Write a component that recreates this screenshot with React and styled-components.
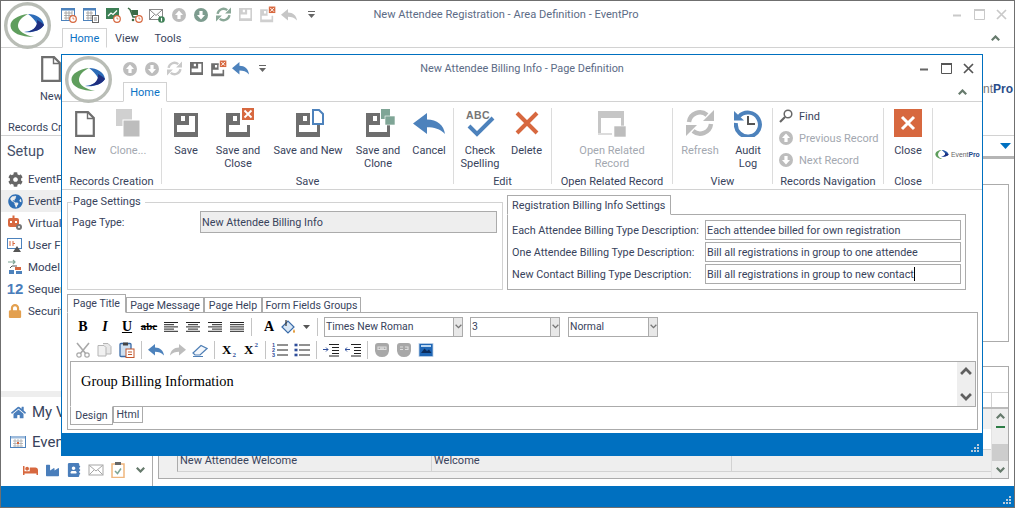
import React from "react";
import styled, { createGlobalStyle } from "styled-components";
import { FaCog, FaGlobeAmericas, FaLock, FaHome, FaBed, FaIndustry, FaAddressBook } from "react-icons/fa";

const BLUE = "#0070c0";
const TEXT = "#38435c";
const LINE = "#ababab";
const SOFT = "#d2d2d2";

const Global = createGlobalStyle`
  html, body { margin: 0; padding: 0; background: #fff; overflow: hidden; }
  #root { width: 1015px; height: 508px; }
  * { box-sizing: border-box; }
`;

const Desktop = styled.div`
  position: relative; width: 1015px; height: 508px; overflow: hidden;
  font: 11px/13px Roboto, "Liberation Sans", sans-serif; color: ${TEXT};
`;

/* ---------- main window ---------- */
const MainWindow = styled.div`
  width: 100%; height: 100%; display: flex; flex-direction: column; background: #fff;
  border: 1px solid #6f6f6f;
`;
const TitleBar = styled.div`
  height: ${p => p.$h}px; flex: none; display: grid; grid-template-columns: 1fr auto 1fr; align-items: center;
`;
const Qat = styled.div`
  display: flex; align-items: center; padding-left: ${p => p.$pad}px;
`;
const QatBtn = styled.span`
  width: 22px; height: 22px; flex: none; display: flex; align-items: center; justify-content: center;
`;
const WinTitle = styled.div`
  color: #5c6b86; font-size: ${p => p.$fs || 10.9}px; white-space: nowrap; padding-right: ${p => p.$shift || 0}px;
`;
const WinControls = styled.div`
  display: flex; justify-content: flex-end; align-items: center; gap: ${p => p.$gap}px; padding-right: ${p => p.$pad}px;
`;
const TabStrip = styled.div`
  height: ${p => p.$h}px; flex: none; display: flex; align-items: flex-end; justify-content: space-between;
  padding-left: ${p => p.$pad}px; padding-right: ${p => p.$right}px; border-bottom: 1px solid ${SOFT};
`;
const TabGroup = styled.div`
  display: flex; align-items: flex-end; margin-bottom: -1px;
`;
const RibbonTab = styled.div`
  height: ${p => p.$h}px; width: ${p => p.$w}px; display: flex; align-items: center; justify-content: center;
  color: ${p => (p.$active ? "#0a72c4" : TEXT)}; font-size: 11px; background: #fff;
  border: 1px solid ${p => (p.$active ? SOFT : "transparent")}; border-bottom: 1px solid ${p => (p.$active ? "#fff" : "transparent")};
`;
const Collapse = styled.span`
  display: flex; align-items: center; padding-bottom: 6px;
`;
const MainRibbon = styled.div`
  height: 88px; flex: none; display: flex; justify-content: space-between; border-bottom: 1px solid ${SOFT};
`;
const MainRibbonLeft = styled.div`
  display: flex; flex-direction: column; align-items: flex-start; padding: 8px 0 0 7px; width: 200px; white-space: nowrap;
`;
const MainNew = styled.div`
  width: 40px; margin-left: 23px; display: flex; flex-direction: column; align-items: center; gap: 8px;
`;
const MainGroupLabel = styled.div`
  margin-top: 18px;
`;
const MainBrand = styled.div`
  padding: 35px 1px 0 0; font: bold 12px/13px "Liberation Sans", sans-serif; color: #2a4d8a; white-space: nowrap;
  & > span { color: #777; font-weight: 400; }
`;
const Body = styled.div`
  flex: 1; min-height: 0; display: flex;
`;
const Sidebar = styled.div`
  width: 152px; flex: none; display: flex; flex-direction: column; border-right: 1px solid ${LINE};
`;
const SideHeading = styled.div`
  font-size: 14.500px; line-height: 18px; padding: 7px 0 7px 6px; color: #46516a;
`;
const SideItem = styled.div`
  height: 22px; display: flex; align-items: center; gap: 5px; padding-left: 6px; white-space: nowrap; overflow: hidden;
  background: ${p => (p.$on ? "#eeeeee" : "transparent")}; font-size: 11.500px; flex: none;
`;
const SideIcon = styled.span`
  width: 16px; height: 16px; display: flex; align-items: center; justify-content: center; flex: none; color: ${p => p.$c || "#666"};
  font: bold 15px/16px "Liberation Sans", sans-serif;
`;
const SideBand = styled.div`
  margin-top: 69px; height: 6px; background: #eeeeee; flex: none;
`;
const NavItem = styled.div`
  height: 30px; display: flex; align-items: center; gap: 6px; padding-left: 9px; font-size: 15px; white-space: nowrap; flex: none;
`;
const NavIcons = styled.div`
  margin-top: 5px; display: flex; align-items: center; padding-left: 18px; color: #4a7ebb;
`;
const NavSlot = styled.span`
  width: 22px; height: 16px; flex: none; display: flex; align-items: center; justify-content: center; color: ${p => p.$c || "#4a7ebb"};
`;
const Pane = styled.div`
  flex: 1; min-width: 0; display: flex; flex-direction: column; padding-right: 5px;
`;
const PaneHeader = styled.div`
  height: 23px; flex: none; border-bottom: 3px solid #b5b5b5; margin-right: -5px; display: flex; justify-content: flex-end; align-items: center; padding-right: 3px;
`;
const PaneBox = styled.div`
  margin-left: 5px; flex: none; margin-top: ${p => p.$top}px; height: ${p => p.$h}px; border: 1px solid ${LINE}; display: flex; flex-direction: column;
`;
const GridHead = styled.div`
  height: 40px; flex: none; display: flex; flex-direction: column; justify-content: flex-end;
`;
const GridHeadCells = styled.div`
  height: 15px; border-top: 1px solid ${SOFT}; display: flex; justify-content: flex-end;
`;
const HeadCell = styled.span`
  width: 17px; border-left: 1px solid ${SOFT};
`;
const GridBody = styled.div`
  flex: 1; display: flex; border-top: 2px solid #bbb; background: #f0f0f0;
`;
const GridRows = styled.div`
  flex: 1; padding-left: 18px; display: flex; flex-direction: column;
`;
const BlankRow = styled.div`
  height: 21px; margin-top: 20px; background: #fff; border-bottom: 1px solid ${SOFT}; flex: none;
`;
const WelcomeRow = styled.div`
  height: 22px; display: flex; align-items: center; border-left: 1px solid ${LINE}; border-bottom: 1px solid ${SOFT}; flex: none;
  background: #eeeeee;
`;
const WelcomeCell = styled.span`
  width: ${p => p.$w}px; padding-left: 2px; border-right: 1px solid ${SOFT}; height: 100%; display: flex; align-items: center;
`;
const GridScroll = styled.div`
  width: 17px; flex: none; border-left: 1px solid #e3e3e3; display: flex; flex-direction: column; align-items: center; background: #eee; padding-top: 4px;
`;
const Dash = styled.span`
  width: 9px; height: 2px; background: #2d7d46; margin-top: 7px; flex: none;
`;
const Thumb = styled.span`
  width: 100%; height: 17px; background: #cdcdcd; margin-top: 16px; flex: none; margin-bottom: 6px;
`;
const StatusBar = styled.div`
  height: 21px; flex: none; background: ${BLUE}; display: flex; justify-content: flex-end; align-items: flex-end; padding: 0 2px 2px 0;
`;

/* ---------- modal window ---------- */
const ModalWindow = styled.div`
  position: absolute; left: 61px; top: 54px; width: 922px; height: 402px; display: flex; flex-direction: column;
  background: #fff; border: 1px solid ${BLUE};
`;
const Orb = styled.svg`
  position: absolute; left: ${p => p.$x}px; top: ${p => p.$y}px; z-index: 2;
`;
const Ribbon = styled.div`
  height: 88px; flex: none; display: flex; border-bottom: 1px solid ${SOFT}; padding-top: 6px;
`;
const Group = styled.div`
  width: ${p => p.$w}px; flex: none; display: flex; flex-direction: column; align-items: center;
  border-right: 1px solid ${p => (p.$last ? "transparent" : "#dcdcdc")}; height: 76px;
`;
const GroupRow = styled.div`
  height: 66px; flex: none; display: flex; justify-content: ${p => p.$j || "flex-start"}; align-self: stretch; padding-left: ${p => p.$pad || 0}px;
`;
const GroupLabel = styled.div`
  height: 13px; flex: none; margin-top: 1px; white-space: nowrap; text-align: center; align-self: stretch;
`;
const BigBtn = styled.div`
  width: ${p => p.$w}px; flex: none; display: flex; flex-direction: column; align-items: center; text-align: center;
  color: ${p => (p.$off ? "#a3a8b0" : TEXT)};
`;
const BigIcon = styled.span`
  height: 29px; margin-bottom: 7px; padding-bottom: ${p => p.$lift || 0}px; display: flex; align-items: flex-end; justify-content: center; flex: none;
`;
const BigText = styled.span`
  display: block; white-space: pre-line; line-height: 13px;
`;
const NavStack = styled.div`
  display: flex; flex-direction: column; margin-top: -3px; padding-left: 6px;
`;
const NavLine = styled.div`
  height: 22px; display: flex; align-items: center; gap: 6px; white-space: nowrap; color: ${p => (p.$off ? "#a3a8b0" : TEXT)};
`;
const Brand = styled.div`
  display: flex; align-items: center; gap: 2px; margin-top: 27px; padding-left: 2px;
  font: 6.800px/10px "Liberation Sans", sans-serif; color: #666; white-space: nowrap;
  & b { color: #234a8c; }
`;
const SettingsRow = styled.div`
  height: 101px; flex: none; display: flex; padding-left: 5px; font-size: 10.800px;
`;
const Fieldset = styled.fieldset`
  width: 436px; height: 95px; flex: none; margin: 5px 0 0; padding: 3px 5px 0 4px; border: 1px solid ${SOFT}; min-inline-size: 0;
  & > legend { padding: 0 4px 0 1px; margin-left: 0; font-size: 11px; line-height: 14px; }
`;
const TypeRow = styled.div`
  display: flex; align-items: center; margin-top: -1px;
`;
const TypeLabel = styled.div`
  width: 128px; flex: none;
`;
const ReadOnly = styled.div`
  width: 297px; height: 22px; background: #eeeeee; border: 1px solid ${LINE}; display: flex; align-items: center; padding-left: 1px;
`;
const SideTabs = styled.div`
  flex: none; margin-left: 4px; padding-top: 5px; display: flex; flex-direction: column; height: 100%;
`;
const SingleTab = styled.div`
  width: 164px; height: 20px; border: 1px solid ${LINE}; border-bottom: 1px solid #fff; margin-bottom: -1px; z-index: 1; background: #fff;
  display: flex; align-items: center; padding-left: 4px; flex: none; white-space: nowrap;
`;
const SidePanel = styled.div`
  width: 459px; height: 76px; border: 1px solid ${LINE}; padding: 5px 4px 0 4px; display: flex; flex-direction: column; gap: 2px; flex: none;
`;
const BillRow = styled.div`
  display: flex; align-items: center; height: 20px;
`;
const BillLabel = styled.div`
  width: 193px; flex: none; white-space: nowrap;
`;
const BillInput = styled.div`
  width: 256px; height: 20px; border: 1px solid ${LINE}; display: flex; align-items: center; padding-left: 1px; white-space: nowrap;
`;
const Caret = styled.span`
  width: 1px; height: 14px; background: #000; flex: none;
`;
const EditorTabs = styled.div`
  margin: 2px 0 0 5px; display: flex; align-items: flex-end; height: 19px; flex: none; font-size: 10.600px;
`;
const EditorTab = styled.div`
  height: ${p => (p.$active ? 19 : 16)}px; width: ${p => p.$w}px; flex: none; display: flex; align-items: center; justify-content: center; background: #fff;
  border: 1px solid ${LINE}; border-bottom: 1px solid ${p => (p.$active ? "#fff" : LINE)}; margin-bottom: -1px; z-index: 1; white-space: nowrap;
`;
const EditorPanel = styled.div`
  margin-left: 5px; width: 911px; height: 118px; flex: none; border: 1px solid ${LINE}; padding: 2px 1px 0 2px; display: flex; flex-direction: column;
`;
const Toolbar = styled.div`
  height: ${p => p.$h}px; flex: none; display: flex; align-items: center; padding-left: 2px;
`;
const ToolBtn = styled.span`
  width: ${p => p.$w || 22}px; height: 20px; flex: none; display: flex; align-items: center; justify-content: center; color: #000;
  font-family: "Liberation Serif", serif; font-size: ${p => p.$fs || 14}px; font-weight: 700;
`;
const Script = styled.span`
  font-size: 7px; color: #2f4e9a; align-self: ${p => (p.$up ? "flex-start" : "flex-end")}; line-height: 10px; margin-left: 1px;
`;
const ToolSep = styled.span`
  width: 1px; height: 18px; flex: none; background: #c4c4c4; margin: 0 ${p => p.$r ?? 3}px 0 ${p => p.$l ?? 3}px;
`;
const Select = styled.div`
  width: ${p => p.$w}px; height: 20px; flex: none; margin-right: ${p => p.$mr || 0}px; border: 1px solid ${LINE}; display: flex; align-items: center; justify-content: space-between; padding-left: 1px; font-size: 10.400px;
`;
const SelectArrow = styled.span`
  width: 9px; align-self: stretch; background: #e8e8e8; border-left: 1px solid ${LINE}; display: flex; align-items: center; justify-content: center;
`;
const EditArea = styled.div`
  height: 46px; flex: none; border: 1px solid ${LINE}; display: flex;
`;
const EditText = styled.div`
  flex: 1; padding: 10px 0 0 10px; color: #000; font: 14.400px/18px "Liberation Serif", serif;
`;
const EditScroll = styled.div`
  width: 18px; flex: none; background: #eeeeee; display: flex; flex-direction: column; align-items: center; justify-content: space-between; padding: 5px 0;
`;
const ModeTabs = styled.div`
  display: flex; align-items: flex-start; margin-top: -1px; font-size: 10.600px;
`;
const ModeTab = styled.div`
  width: ${p => p.$w}px; height: ${p => (p.$active ? 19 : 17)}px; flex: none; background: #fff; display: flex; align-items: center; justify-content: center;
  border: 1px solid ${LINE}; border-top: 1px solid ${p => (p.$active ? "#fff" : LINE)};
`;
const ModalFooter = styled.div`
  margin-top: auto; height: 22px; flex: none; background: ${BLUE}; display: flex; justify-content: flex-end; align-items: flex-end; padding: 0 2px 2px 0;
`;

/* ---------- drawings ---------- */
const G = "#6e6e6e", L = "#bdbdbd", B = "#4d82bc", O = "#d7683f", T = "#7fa596";

const Floppy = ({ c = G, s = 24, badge }) => (
  <svg
    width={badge ? (32 * s) / 24 : s}
    height={badge ? (30 * s) / 24 : s}
    viewBox={badge ? "-4 -6 32 30" : "0 0 24 24"}
    style={{ overflow: "visible" }}
  >
    <path fillRule="evenodd" fill={c} d="M0 0H24V24H0Z M3 12V19H21V12Z M15 3V12H21V3Z M7 3V8H11V3Z" />
    {badge && <rect x="14" y="-6" width="14" height="18" fill="#fff" />}
    {badge && <path d="M14 3H21V12H14Z" fill="#fff" />}
    {badge === "x" && <g><rect x="16" y="-5" width="12" height="12" fill={O} /><path d="M18.500-2.500l7 7m0-7l-7 7" stroke="#fff" strokeWidth="1.800" /></g>}
    {badge === "new" && <path d="M17-3h6l4 4V11H17Z" fill="#fff" stroke={B} strokeWidth="2" />}
    {badge === "clone" && <g><rect x="15" y="-4" width="9" height="10" fill={T} /><rect x="19" y="3" width="10" height="9" fill={T} stroke="#fff" strokeWidth=".6" /></g>}
  </svg>
);
const PageIcon = ({ w = 20, h = 26, c = G }) => (
  <svg width={w} height={h} viewBox="0 0 20 26"><path d="M1.200 1.200H13L18.800 7V24.800H1.200Z" fill="#fff" stroke={c} strokeWidth="2.200" /><path d="M12.500 1.500V7.500H18.500" fill="none" stroke={c} strokeWidth="1.400" /></svg>
);
const CloneIcon = () => (
  <svg width="24" height="28" viewBox="0 0 24 28"><rect x="0" y="0" width="16" height="17" fill="#d0d0d0" /><rect x="7" y="11" width="17" height="17" fill={L} stroke="#fff" strokeWidth="1" /></svg>
);
const ArrowBack = ({ c = B, w = 32, h = 22 }) => (
  <svg width={w} height={h} viewBox="0 0 32 24" preserveAspectRatio="none"><path d="M0 11.500L14 0V7C24 7 31 13 32 23C27 17 21 15.500 14 15.500V23Z" fill={c} /></svg>
);
const ArrowFwd = ({ c = L, w = 16, h = 12 }) => (
  <svg width={w} height={h} viewBox="0 0 32 24"><path d="M32 11.500L18 0V7C8 7 1 13 0 23C5 17 11 15.500 18 15.500V23Z" fill={c} /></svg>
);
const Check = () => (
  <svg width="30" height="27" viewBox="0 0 30 27">
    <text x="1" y="8.500" fontFamily="Liberation Sans, sans-serif" fontWeight="700" fontSize="10.500" letterSpacing=".4" fill="#767676">ABC</text>
    <path d="M4 16l8 8L28 8" fill="none" stroke={B} strokeWidth="4" />
  </svg>
);
const BigX = () => (
  <svg width="24" height="24" viewBox="0 0 24 24"><path d="M2 2L22 22M22 2L2 22" stroke={O} strokeWidth="4" /></svg>
);
const OpenRel = () => (
  <svg width="28" height="26" viewBox="0 0 28 26"><path fillRule="evenodd" fill="#c6c6c6" d="M0 0H26V22H16V19H23V7H3V22H0Z" /><rect x="16" y="15" width="12" height="11" fill={L} stroke="#fff" strokeWidth=".6" /><rect x="0" y="22" width="14" height="2" fill="#dcdcdc" /></svg>
);
const Refresh = ({ s = 28, c = L }) => (
  <svg width={s} height={s} viewBox="0 0 28 28">
    <path d="M3 13A11 11 0 0 1 21 6" fill="none" stroke={c} strokeWidth="4.400" />
    <path d="M28 1V12H17Z" fill={c} />
    <path d="M25 15A11 11 0 0 1 7 22" fill="none" stroke={c} strokeWidth="4.400" />
    <path d="M0 27V16H11Z" fill={c} />
  </svg>
);
const Audit = () => (
  <svg width="28" height="28" viewBox="0 0 28 28">
    <path d="M5 7.500A12 12 0 1 1 2 14" fill="none" stroke={B} strokeWidth="4" />
    <path d="M0 2L10 11.500H0Z" fill={B} />
    <path d="M14 7V15H21" fill="none" stroke="#555" strokeWidth="2" />
  </svg>
);
const Circ = ({ c = L, dir = "up", s = 14 }) => (
  <svg width={s} height={s} viewBox="0 0 14 14">
    <circle cx="7" cy="7" r="7" fill={c} />
    <path d={dir === "up" ? "M7 2.500L11 7H8.600V11H5.400V7H3Z" : "M7 11.500L11 7H8.600V3H5.400V7H3Z"} fill="#fff" />
  </svg>
);
const Find = () => (
  <svg width="14" height="14" viewBox="0 0 14 14"><circle cx="9" cy="5" r="3.800" fill="none" stroke="#666" strokeWidth="1.500" /><path d="M6 8L1 13" stroke="#666" strokeWidth="2.200" /></svg>
);
const CloseBig = () => (
  <svg width="28" height="28" viewBox="0 0 28 28"><rect width="28" height="28" fill={O} /><path d="M8 8L20 20M20 8L8 20" stroke="#fff" strokeWidth="3" /></svg>
);
const Swoosh = ({ s = 46 }) => (
  <svg width={s} height={s * 0.7} viewBox="0 0 46 32">
    <path d="M22 0C11 0 2 6 1 14C1 22 12 30 30 32C18 27 10 22 10 16C10 9 15 3 22 0Z" fill="#5f9e5d" />
    <path d="M22 0C31 0 42 5 45 15C40 21 30 23 20 21C29 20 35 17 35 13C32 9 27 5 22 0Z" fill="#2459a8" />
    <path d="M33 9C38 11 42 13 45 15C41 20 33 22 25 22C31 19 35 14 33 9Z" fill="#1d2f7e" />
  </svg>
);
const LogoOrb = ({ x, y }) => (
  <Orb $x={x} $y={y} width="47" height="47" viewBox="0 0 47 47">
    <circle cx="23.500" cy="23.500" r="21.800" fill="#fff" stroke="#b9bdb6" strokeWidth="3.400" />
    <path d="M24 12C14 13 6 18 6.500 24C7 31 17 35 30 35C21 33 14 29 14 24C14 19 18 15 24 12Z" fill="#5f9e5d" />
    <path d="M24 12C32 12 39 16 40 23C36 29 28 31 20 30C28 29 33 26 33 22C31 18 28 15 24 12Z" fill="#2d6cb8" />
    <path d="M33 18C36 20 39 21 40 23C37 28 30 30 24 30C30 28 34 23 33 18Z" fill="#1f2f80" />
  </Orb>
);
const Chevron = ({ dir = "up", c = "#667a6c", w = 9, h = 6, sw = 2.200 }) => (
  <svg width={w} height={h} viewBox="0 0 9 6"><path d={dir === "up" ? "M.8 5.200L4.500 1.500L8.200 5.200" : "M.8 .8L4.500 4.500L8.200 .8"} fill="none" stroke={c} strokeWidth={sw} /></svg>
);
const MinIcon = ({ c }) => <svg width="10" height="10" viewBox="0 0 10 10"><rect x="0" y="4.500" width="8" height="2" fill={c} /></svg>;
const MaxIcon = ({ c }) => <svg width="11" height="11" viewBox="0 0 11 11"><path d="M.5 .5H10.500V10.500H.5Z" fill="none" stroke={c} /><rect y="0" width="11" height="2" fill={c} /></svg>;
const XIcon = ({ c }) => <svg width="11" height="11" viewBox="0 0 11 11"><path d="M1 1L10 10M10 1L1 10" stroke={c} strokeWidth="1.700" /></svg>;
const Grip = () => (
  <svg width="9" height="9" viewBox="0 0 9 9" fill="#b9cbdc">
    <rect x="6" y="0" width="2" height="2" /><rect x="3" y="3" width="2" height="2" /><rect x="6" y="3" width="2" height="2" />
    <rect x="0" y="6" width="2" height="2" /><rect x="3" y="6" width="2" height="2" /><rect x="6" y="6" width="2" height="2" />
  </svg>
);
const QatDrop = () => (
  <svg width="7" height="8" viewBox="0 0 7 8"><rect width="7" height="1" fill="#666" /><path d="M0 3H7L3.500 7Z" fill="#666" /></svg>
);
const Tiny = ({ v = "0 0 16 16", s = 16, children }) => <svg width={s} height={s} viewBox={v}>{children}</svg>;

const ClockBadge = () => (
  <g><circle cx="12" cy="12" r="3.300" fill="#fff" stroke={O} strokeWidth="1.200" /><path d="M12 10.300V12H13.400" stroke={O} fill="none" strokeWidth=".8" /></g>
);
const CalClock = () => (
  <Tiny>
    <rect x=".5" y="1.500" width="13" height="12" fill="#fff" stroke={B} /><rect x="1" y="1" width="12" height="2.500" fill={B} />
    <path d="M3 6h8M3 8.500h8M3 11h8M5 4v9M8 4v9M11 4v9" stroke="#999" strokeWidth=".8" />
    <ClockBadge />
  </Tiny>
);
const CalDoc = () => (
  <Tiny>
    <rect x=".5" y="1.500" width="12" height="12" fill="#fff" stroke={B} /><rect x="1" y="1" width="12" height="2.500" fill={B} />
    <path d="M3 6h7M3 8.500h7M3 11h7M5 4v9M8 4v9" stroke="#999" strokeWidth=".8" />
    <rect x="9.500" y="8.500" width="6" height="7" fill="#fff" stroke="#666" /><path d="M11 11h3M11 13h3" stroke="#666" strokeWidth=".8" />
  </Tiny>
);
const CalPlain = () => (
  <Tiny>
    <rect x=".5" y="2.500" width="15" height="11" fill="#fff" stroke={B} /><rect x="1" y="2" width="14" height="2.500" fill="#9dbbdc" />
    <path d="M3 7h10M3 9.500h10M3 12h10M5 5v8M8 5v8M11 5v8" stroke="#a9a9a9" strokeWidth=".8" /><rect x="7" y="8" width="2" height="2" fill={O} />
  </Tiny>
);
const ChartClock = () => (
  <Tiny>
    <rect x="1" y="1" width="13" height="11" fill="#3d7f55" /><path d="M3 9L6 6L8 7.500L12 3.500" stroke="#fff" strokeWidth="1.200" fill="none" />
    <ClockBadge />
  </Tiny>
);
const CartClock = () => (
  <Tiny>
    <path d="M1 1L3 2.500L6 10H11" stroke="#3a6b45" strokeWidth="1.500" fill="none" /><path d="M4 3H11V8H5.500Z" fill="#3a6b45" /><circle cx="6" cy="13" r="1.300" fill="#3a6b45" />
    <ClockBadge />
  </Tiny>
);
const MailBadge = () => (
  <Tiny>
    <rect x=".5" y="2.500" width="13" height="10" fill="#fff" stroke="#888" /><path d="M1 3L7 8.500L13 3M1 12L5.500 7.500M13 12L8.500 7.500" stroke="#888" fill="none" />
    <circle cx="12.500" cy="12.500" r="3.300" fill="#3d7f55" /><path d="M12.500 10.800V14.400" stroke="#fff" strokeWidth="1.200" />
  </Tiny>
);
const MailPlain = () => (
  <Tiny>
    <rect x="1" y="3" width="14" height="10" fill="#fff" stroke="#a5a5a5" /><path d="M1.500 3.500L8 9L14.500 3.500M1.500 12.500L6 8M14.500 12.500L10 8" stroke="#a5a5a5" fill="none" />
  </Tiny>
);
const Clipboard = () => (
  <Tiny>
    <rect x="2" y="2" width="12" height="13.500" fill="#fff" stroke="#efb67d" strokeWidth="1.500" /><rect x="5" y="0" width="6" height="3" fill="#666" /><path d="M5 9L7.500 11.500L11 6.500" stroke="#7fa596" strokeWidth="1.500" fill="none" />
  </Tiny>
);
const RobotGear = () => (
  <Tiny>
    <rect x="1" y="3" width="11" height="9" rx="2" fill={O} /><rect x="3" y="6" width="2" height="2" fill="#fff" /><rect x="8" y="6" width="2" height="2" fill="#fff" />
    <rect x="5.500" y="0.500" width="2" height="2.500" fill={O} /><circle cx="12" cy="12" r="3" fill="#777" /><circle cx="12" cy="12" r="1" fill="#fff" />
  </Tiny>
);
const FieldIcon = () => (
  <Tiny>
    <rect x=".5" y="1.500" width="14" height="10" fill="#fff" stroke={B} /><path d="M3 4V9M6 4V9M6 6.500H8" stroke={O} strokeWidth="1" /><path d="M10 9L14 15H6Z" fill="#555" />
  </Tiny>
);
const ModelIcon = () => (
  <Tiny>
    <path d="M1 3H8M6 1L8 3L6 5" stroke="#7fa596" strokeWidth="1.200" fill="none" /><path d="M10 7H5L3 9" stroke="#555" fill="none" />
    <rect x="8" y="8" width="6" height="3" fill={O} /><rect x="2" y="11" width="5" height="4" fill={B} /><rect x="9" y="12" width="6" height="3" fill={B} />
  </Tiny>
);

const AlignIcon = ({ kind }) => {
  const rows = kind === "left" ? [[0, 14], [0, 10], [0, 14], [0, 10], [0, 14]]
    : kind === "center" ? [[0, 14], [2, 12], [0, 14], [2, 12], [0, 14]]
    : kind === "right" ? [[0, 14], [4, 14], [0, 14], [4, 14], [0, 14]]
    : [[0, 14], [0, 14], [0, 14], [0, 14], [0, 14]];
  return <Tiny v="0 0 14 12" s={14}>{rows.map((r, i) => <path key={i} d={`M${r[0]} ${1.500 + i * 2.200}H${r[1]}`} stroke="#222" />)}</Tiny>;
};
const ListIcon = ({ ordered }) => (
  <Tiny v="0 0 16 14" s={16}>
    {[2, 7, 12].map(y => <path key={y} d={`M5 ${y}H16`} stroke="#222" />)}
    {[1, 6, 11].map((y, i) => ordered
      ? <text key={y} x="0" y={y + 3} fontSize="5.500" fontWeight="700" fontFamily="Liberation Sans, sans-serif" fill="#2f4e9a">{i + 1}</text>
      : <rect key={y} x=".5" y={y - .3} width="3" height="2.600" fill="#2f4e9a" />)}
  </Tiny>
);
const IndentIcon = ({ rev }) => (
  <Tiny v="0 0 16 14" s={16}>
    <path d="M6 1.500H16M9 4.500H16M9 7.500H16M9 10.500H16M6 13H16" stroke="#222" />
    <path d={rev ? "M0 6.500H5M2 4.500L0 6.500L2 8.500" : "M0 6.500H5M3 4.500L5 6.500L3 8.500"} stroke="#2f4e9a" fill="none" />
  </Tiny>
);
const Scissors = () => (
  <Tiny>
    <path d="M2 1L11 12M14 1L5 12" stroke="#a9a9a9" strokeWidth="1.600" />
    <circle cx="4" cy="13" r="2.200" fill="#fff" stroke="#a9a9a9" strokeWidth="1.200" /><circle cx="12" cy="13" r="2.200" fill="#fff" stroke="#a9a9a9" strokeWidth="1.200" />
  </Tiny>
);
const CopyIcon = () => (
  <Tiny>
    <path d="M6 1.500H11L14 4.500V12H9" fill="#e8e8e8" stroke="#b5b5b5" /><path d="M1 3.500H7L9 5.500V14H1Z" fill="#f1f1f1" stroke="#b5b5b5" />
  </Tiny>
);
const PasteIcon = () => (
  <Tiny>
    <rect x="1" y="1.500" width="11" height="13" rx="1" fill="#cfe0f1" stroke="#3a6ba8" strokeWidth="1.300" /><rect x="4" y=".5" width="5" height="3" fill="#444" />
    <rect x="7" y="7" width="8" height="8.500" fill="#fff" stroke="#c2562d" /><path d="M9 10h4M9 12.500h4" stroke="#c2562d" />
  </Tiny>
);
const Eraser = () => (
  <Tiny>
    <path d="M1 11L9 3.500L15 6.500L8 13H3Z" fill="#f4f7fb" stroke="#4f7fb5" strokeWidth="1.200" /><path d="M1 14.500H11" stroke="#4f7fb5" />
  </Tiny>
);
const Paint = () => (
  <Tiny>
    <path d="M2 8L8 2L14 8L8 14Z" fill="#d8e7f6" stroke="#3a6ba8" strokeWidth="1.200" /><path d="M6 1V7" stroke="#333" strokeWidth="1.200" /><path d="M14 10q2 3 0 4q-2-1 0-4" fill="#e39a38" />
  </Tiny>
);
const LinkIcon = ({ broken }) => (
  <Tiny>
    <path d="M1 4Q1 1 4 1H12Q15 1 15 4V9Q14 15 8 15Q2 15 1 9Z" fill="#a8a8a8" />
    {broken
      ? <path d="M4 5H7M9 5H12V7.500H9M7 7.500H4" stroke="#dedede" fill="none" strokeWidth="1.100" />
      : <path d="M4 5H12V7.500H4Z M6 6.250H10" stroke="#dedede" fill="none" strokeWidth="1.100" />}
  </Tiny>
);
const ImageIcon = () => (
  <Tiny>
    <rect x="1" y="1.500" width="14" height="13" fill="#1f66b5" stroke="#bcd0e6" strokeWidth=".8" /><path d="M3 11L6.500 6.500L9 9L11 7.500L13.500 11Z" fill="#0c2c5c" /><rect x="3" y="3" width="10" height="2" fill="#b9d6f2" />
  </Tiny>
);
const SmallSel = () => <Chevron dir="down" c="#777" w={7} h={5} sw={1.700} />;

const modalQat = [
  <Circ key="a" s={14} />, <Circ key="b" s={14} dir="down" />, <Refresh key="c" s={15} c="#c9c9c9" />,
  <Floppy key="d" s={13} />, <Floppy key="e" s={13} badge="x" />, <ArrowBack key="f" w={17} h={13} />,
];
const mainQat = [
  <CalClock key="1" />, <CalDoc key="2" />, <ChartClock key="3" />, <CartClock key="4" />, <MailBadge key="5" />,
  <Circ key="6" s={14} />, <Circ key="7" s={14} dir="down" c="#7d9c8f" />, <Refresh key="8" s={15} c="#8aa898" />,
  <Floppy key="9" s={13} c="#cfcfcf" />, <Floppy key="10" s={13} c="#cfcfcf" badge="x" />, <ArrowBack key="11" w={16} h={12} c="#c6c6c6" />,
];

const sideItems = [
  { t: "EventP", k: "a", i: <FaCog size={15} /> },
  { t: "EventP", k: "b", on: true, c: "#2f6fb5", i: <FaGlobeAmericas size={15} /> },
  { t: "Virtual", k: "c", i: <RobotGear /> },
  { t: "User Fi", k: "d", i: <FieldIcon /> },
  { t: "Model M", k: "e", i: <ModelIcon /> },
  { t: "Sequen", k: "f", c: "#4a7ebb", i: "12" },
  { t: "Securit", k: "g", c: "#e3a04f", i: <FaLock size={14} /> },
];

export default function App() {
  return (
    <Desktop>
      <Global />
      <MainWindow>
        <TitleBar $h={27}>
          <Qat $pad={57}>
            {mainQat.map((ic, i) => <QatBtn key={i}>{ic}</QatBtn>)}
            <QatBtn><QatDrop /></QatBtn>
          </Qat>
          <WinTitle $shift={3} $fs={11.1}>New Attendee Registration - Area Definition - EventPro</WinTitle>
          <WinControls $gap={11} $pad={7}>
            <MinIcon c="#c9c9c9" /><MaxIcon c="#c9c9c9" /><XIcon c="#c9c9c9" />
          </WinControls>
        </TitleBar>
        <TabStrip $h={20} $pad={61} $right={14}>
          <TabGroup>
            <RibbonTab $active $w={45} $h={20}>Home</RibbonTab>
            <RibbonTab $w={40} $h={20}>View</RibbonTab>
            <RibbonTab $w={42} $h={20}>Tools</RibbonTab>
          </TabGroup>
          <Collapse><Chevron /></Collapse>
        </TabStrip>
        <MainRibbon>
          <MainRibbonLeft>
            <MainNew><PageIcon /><span>New</span></MainNew>
            <MainGroupLabel>Records Cr</MainGroupLabel>
          </MainRibbonLeft>
          <MainBrand><span>nt</span>Pro</MainBrand>
        </MainRibbon>
        <Body>
          <Sidebar>
            <SideHeading>Setup</SideHeading>
            {sideItems.map(s => (
              <SideItem key={s.k} $on={s.on}><SideIcon $c={s.c}>{s.i}</SideIcon>{s.t}</SideItem>
            ))}
            <SideBand />
            <NavItem><SideIcon $c="#4a7ebb"><FaHome size={15} /></SideIcon>My V</NavItem>
            <NavItem><SideIcon><CalPlain /></SideIcon>Even</NavItem>
            <NavIcons>
              <NavSlot $c={O}><FaBed size={15} /></NavSlot>
              <NavSlot><FaIndustry size={13} /></NavSlot>
              <NavSlot><FaAddressBook size={14} /></NavSlot>
              <NavSlot><MailPlain /></NavSlot>
              <NavSlot><Clipboard /></NavSlot>
              <NavSlot><Chevron dir="down" /></NavSlot>
            </NavIcons>
          </Sidebar>
          <Pane>
            <PaneHeader><svg width="11" height="6" viewBox="0 0 11 6"><path d="M0 0H11L5.500 6Z" fill={BLUE} /></svg></PaneHeader>
            <PaneBox $top={25} $h={158} />
            <PaneBox $top={24} $h={113}>
              <GridHead><GridHeadCells><HeadCell /></GridHeadCells></GridHead>
              <GridBody>
                <GridRows>
                  <BlankRow />
                  <WelcomeRow>
                    <WelcomeCell $w={254}>New Attendee Welcome</WelcomeCell>
                    <WelcomeCell $w={300}>Welcome</WelcomeCell>
                  </WelcomeRow>
                </GridRows>
                <GridScroll>
                  <Chevron />
                  <Dash />
                  <Thumb />
                  <Chevron dir="down" />
                </GridScroll>
              </GridBody>
            </PaneBox>
          </Pane>
        </Body>
        <StatusBar><Grip /></StatusBar>
      </MainWindow>
      <LogoOrb x={4} y={2} />

      <ModalWindow>
        <TitleBar $h={27}>
          <Qat $pad={57}>
            {modalQat.map((ic, i) => <QatBtn key={i}>{ic}</QatBtn>)}
            <QatBtn><QatDrop /></QatBtn>
          </Qat>
          <WinTitle>New Attendee Billing Info - Page Definition</WinTitle>
          <WinControls $gap={11} $pad={8}>
            <MinIcon c="#666" /><MaxIcon c="#555" /><XIcon c="#555" />
          </WinControls>
        </TitleBar>
        <TabStrip $h={20} $pad={61} $right={15}>
          <TabGroup><RibbonTab $active $w={44} $h={20}>Home</RibbonTab></TabGroup>
          <Collapse><Chevron /></Collapse>
        </TabStrip>
        <Ribbon>
          <Group $w={100}>
            <GroupRow>
              <BigBtn $w={46}><BigIcon><PageIcon /></BigIcon><BigText>New</BigText></BigBtn>
              <BigBtn $w={40} $off><BigIcon><CloneIcon /></BigIcon><BigText>Clone...</BigText></BigBtn>
            </GroupRow>
            <GroupLabel>Records Creation</GroupLabel>
          </Group>
          <Group $w={292}>
            <GroupRow $pad={1}>
              <BigBtn $w={46}><BigIcon><Floppy /></BigIcon><BigText>Save</BigText></BigBtn>
              <BigBtn $w={58}><BigIcon><Floppy badge="x" /></BigIcon><BigText>{"Save and\nClose"}</BigText></BigBtn>
              <BigBtn $w={82}><BigIcon><Floppy badge="new" /></BigIcon><BigText>Save and New</BigText></BigBtn>
              <BigBtn $w={58}><BigIcon><Floppy badge="clone" /></BigIcon><BigText>{"Save and\nClone"}</BigText></BigBtn>
              <BigBtn $w={44}><BigIcon $lift={2}><ArrowBack /></BigIcon><BigText>Cancel</BigText></BigBtn>
            </GroupRow>
            <GroupLabel>Save</GroupLabel>
          </Group>
          <Group $w={98}>
            <GroupRow $pad={3}>
              <BigBtn $w={46}><BigIcon><Check /></BigIcon><BigText>{"Check\nSpelling"}</BigText></BigBtn>
              <BigBtn $w={47}><BigIcon $lift={2}><BigX /></BigIcon><BigText>Delete</BigText></BigBtn>
            </GroupRow>
            <GroupLabel>Edit</GroupLabel>
          </Group>
          <Group $w={121}>
            <GroupRow $j="center">
              <BigBtn $w={90} $off><BigIcon><OpenRel /></BigIcon><BigText>{"Open Related\nRecord"}</BigText></BigBtn>
            </GroupRow>
            <GroupLabel>Open Related Record</GroupLabel>
          </Group>
          <Group $w={100}>
            <GroupRow $pad={4}>
              <BigBtn $w={46} $off><BigIcon><Refresh /></BigIcon><BigText>Refresh</BigText></BigBtn>
              <BigBtn $w={50}><BigIcon><Audit /></BigIcon><BigText>{"Audit\nLog"}</BigText></BigBtn>
            </GroupRow>
            <GroupLabel>View</GroupLabel>
          </Group>
          <Group $w={111}>
            <GroupRow>
              <NavStack>
                <NavLine><Find />Find</NavLine>
                <NavLine $off><Circ />Previous Record</NavLine>
                <NavLine $off><Circ dir="down" />Next Record</NavLine>
              </NavStack>
            </GroupRow>
            <GroupLabel>Records Navigation</GroupLabel>
          </Group>
          <Group $w={49}>
            <GroupRow $j="center">
              <BigBtn $w={44}><BigIcon><CloseBig /></BigIcon><BigText>Close</BigText></BigBtn>
            </GroupRow>
            <GroupLabel>Close</GroupLabel>
          </Group>
          <Group $w={49} $last>
            <GroupRow>
              <Brand><Swoosh s={14} /><span>Event<b>Pro</b></span></Brand>
            </GroupRow>
          </Group>
        </Ribbon>
        <SettingsRow>
          <Fieldset>
            <legend>Page Settings</legend>
            <TypeRow>
              <TypeLabel>Page Type:</TypeLabel>
              <ReadOnly>New Attendee Billing Info</ReadOnly>
            </TypeRow>
          </Fieldset>
          <SideTabs>
            <SingleTab>Registration Billing Info Settings</SingleTab>
            <SidePanel>
              <BillRow><BillLabel>Each Attendee Billing Type Description:</BillLabel><BillInput>Each attendee billed for own registration</BillInput></BillRow>
              <BillRow><BillLabel>One Attendee Billing Type Description:</BillLabel><BillInput>Bill all registrations in group to one attendee</BillInput></BillRow>
              <BillRow><BillLabel>New Contact Billing Type Description:</BillLabel><BillInput>Bill all registrations in group to new contact<Caret /></BillInput></BillRow>
            </SidePanel>
          </SideTabs>
        </SettingsRow>
        <EditorTabs>
          <EditorTab $active $w={59}>Page Title</EditorTab>
          <EditorTab $w={78}>Page Message</EditorTab>
          <EditorTab $w={58}>Page Help</EditorTab>
          <EditorTab $w={99}>Form Fields Groups</EditorTab>
        </EditorTabs>
        <EditorPanel>
          <Toolbar $h={23}>
            <ToolBtn>B</ToolBtn>
            <ToolBtn><i>I</i></ToolBtn>
            <ToolBtn><u>U</u></ToolBtn>
            <ToolBtn $fs={11}><s>abc</s></ToolBtn>
            <ToolBtn><AlignIcon kind="left" /></ToolBtn>
            <ToolBtn><AlignIcon kind="center" /></ToolBtn>
            <ToolBtn><AlignIcon kind="right" /></ToolBtn>
            <ToolBtn><AlignIcon kind="justify" /></ToolBtn>
            <ToolSep $r={6} />
            <ToolBtn>A</ToolBtn>
            <ToolBtn $w={16}><Paint /></ToolBtn>
            <ToolBtn $w={21}><svg width="7" height="4" viewBox="0 0 7 4"><path d="M0 0H7L3.500 4Z" fill="#555" /></svg></ToolBtn>
            <ToolSep $l={0} $r={6} />
            <Select $w={139} $mr={7}>Times New Roman<SelectArrow><SmallSel /></SelectArrow></Select>
            <Select $w={90} $mr={8}>3<SelectArrow><SmallSel /></SelectArrow></Select>
            <Select $w={90}>Normal<SelectArrow><SmallSel /></SelectArrow></Select>
          </Toolbar>
          <Toolbar $h={23}>
            <ToolBtn><Scissors /></ToolBtn>
            <ToolBtn><CopyIcon /></ToolBtn>
            <ToolBtn><PasteIcon /></ToolBtn>
            <ToolSep />
            <ToolBtn><ArrowBack w={16} h={12} /></ToolBtn>
            <ToolBtn><ArrowFwd /></ToolBtn>
            <ToolBtn><Eraser /></ToolBtn>
            <ToolSep />
            <ToolBtn $fs={13}>X<Script>2</Script></ToolBtn>
            <ToolBtn $fs={13}>X<Script $up>2</Script></ToolBtn>
            <ToolSep />
            <ToolBtn><ListIcon ordered /></ToolBtn>
            <ToolBtn><ListIcon /></ToolBtn>
            <ToolSep />
            <ToolBtn><IndentIcon /></ToolBtn>
            <ToolBtn><IndentIcon rev /></ToolBtn>
            <ToolSep />
            <ToolBtn><LinkIcon /></ToolBtn>
            <ToolBtn><LinkIcon broken /></ToolBtn>
            <ToolBtn><ImageIcon /></ToolBtn>
          </Toolbar>
          <EditArea>
            <EditText>Group Billing Information</EditText>
            <EditScroll>
              <Chevron c="#5f5f5f" w={12} h={8} sw={2} />
              <Chevron dir="down" c="#5f5f5f" w={12} h={8} sw={2} />
            </EditScroll>
          </EditArea>
          <ModeTabs>
            <ModeTab $active $w={43}>Design</ModeTab>
            <ModeTab $w={30}>Html</ModeTab>
          </ModeTabs>
        </EditorPanel>
        <ModalFooter><Grip /></ModalFooter>
      </ModalWindow>
      <LogoOrb x={65} y={56} />
    </Desktop>
  );
}
